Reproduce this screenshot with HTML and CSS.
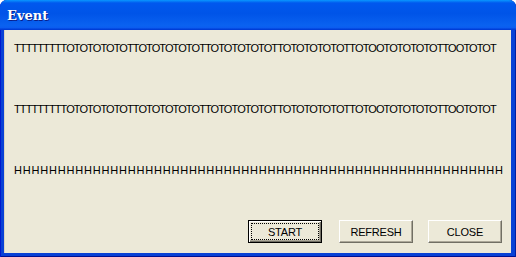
FILE: index.html
```html
<!DOCTYPE html>
<html lang="en">
<head>
  <meta charset="UTF-8">
  <title>Event</title>
  <link rel="stylesheet" href="styles.css">
</head>
<body>
  <div class="window">
    <!-- Barra de titulo -->
    <div class="titlebar">
      <span class="title">Event</span>
    </div>
    <div class="client">
      <div class="row">TTTTTTTTTOTOTOTOTOTTOTOTOTOTOTTOTOTOTOTOTTOTOTOTOTOTTOTOOTOTOTOTOTTOOTOTOT</div>
      <div class="row">TTTTTTTTTOTOTOTOTOTTOTOTOTOTOTTOTOTOTOTOTTOTOTOTOTOTTOTOOTOTOTOTOTTOOTOTOT</div>
      <div class="row hrow">HHHHHHHHHHHHHHHHHHHHHHHHHHHHHHHHHHHHHHHHHHHHHHHHHHHHHHHH</div>
      <div class="buttons">
        <button class="btn default"><span>START</span></button>
        <button class="btn refresh"><span>REFRESH</span></button>
        <button class="btn"><span>CLOSE</span></button>
      </div>
    </div>
  </div>
</body>
</html>
```

FILE: styles.css
```css
/* Ventana estilo XP */
body {
  margin: 0;
  background: #fff;
  font-family: Tahoma, "DejaVu Sans", sans-serif;
}

.window {
  width: 516px;
  height: 257px;
  background: #0841d6;
  border-radius: 7px 7px 0 0;
  display: flex;
  flex-direction: column;
  box-shadow: inset 1px 0 0 #0019cf, inset -1px 0 0 #001ea0, inset 0 -1px 0 #001090;
}

.titlebar {
  height: 30px;
  flex-shrink: 0;
  box-sizing: border-box;
  border-radius: 7px 7px 0 0;
  background: linear-gradient(to bottom, #0997ff 0%, #0058ee 10%, #0054e8 45%, #0a62f0 85%, #0b5cf0 93%, #003dd7 97%, #003dd7 100%);
  padding: 8px 0 0 7px;
}

.title {
  display: block;
  color: #fff;
  font-family: "DejaVu Serif", serif;
  font-weight: bold;
  font-size: 13px;
  line-height: 15px;
  text-shadow: 1px 1px 0 #0a1f8a;
}

.client {
  flex: 1;
  margin: 0 5px 4px 4px;
  background: #ece9d8;
  padding: 12px 9px 0 10px;
  display: flex;
  flex-direction: column;
  box-shadow: inset 1px 0 0 #d8d4c4;
}

.row {
  font-family: "Liberation Sans", Arial, sans-serif;
  font-size: 11px;
  letter-spacing: -0.9px;
  color: #000;
  white-space: nowrap;
  height: 13px;
  line-height: 13px;
  margin-bottom: 48px;
}

.hrow {
  letter-spacing: 0.8px;
  margin-bottom: 0;
}

.buttons {
  margin-top: auto;
  display: flex;
  justify-content: flex-end;
  gap: 17px;
  margin-bottom: 10px;
}

.btn {
  width: 74px;
  height: 23px;
  padding: 0;
  background: #ece9d8;
  border: 1px solid;
  border-color: #fff #716f64 #716f64 #fff;
  box-shadow: inset -1px -1px 0 #aca899;
  font-family: "Liberation Sans", Arial, sans-serif;
  font-size: 11px;
  letter-spacing: -0.2px;
  color: #000;
  display: flex;
  align-items: center;
  justify-content: center;
}

.btn.refresh {
  margin-right: -2px;
}

.btn.default {
  border: 1px solid #000;
  box-shadow: inset 1px 1px 0 #fff, inset -1px -1px 0 #716f64, inset -2px -2px 0 #aca899;
}

.btn.default span {
  display: flex;
  align-items: center;
  justify-content: center;
  width: 66px;
  height: 15px;
  border: 1px dotted #000;
}
```
